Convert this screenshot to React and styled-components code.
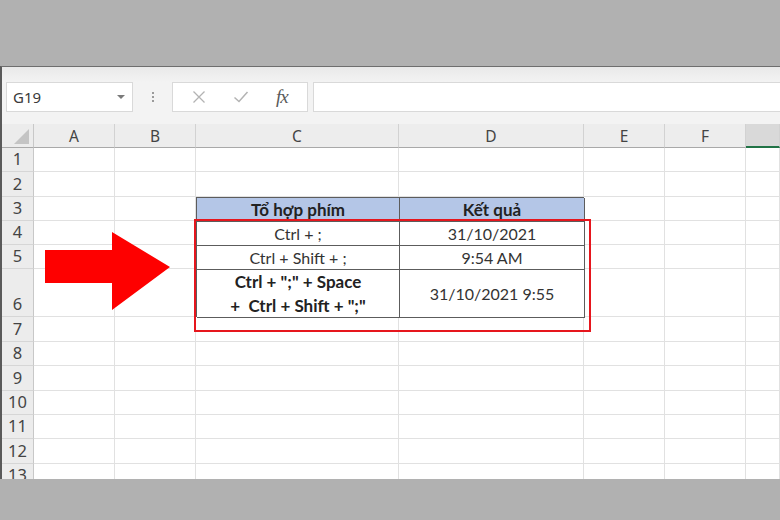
import React from "react";
import styled, { createGlobalStyle } from "styled-components";

const GlobalStyle = createGlobalStyle`
  html, body {
    margin: 0;
    padding: 0;
    background: #b1b1b1;
  }
  * {
    box-sizing: border-box;
  }
`;

const cols = ["A", "B", "C", "D", "E", "F", "G"];
const colWidths = "32px 81px 81px 203px 185px 81px 81px 1fr";
const rows = [24, 25, 24, 24, 24, 48, 25, 24, 25, 24, 24, 25, 24];

const Page = styled.div`
  position: relative;
  width: 780px;
  height: 520px;
  padding-top: 66px;
  overflow: hidden;
`;

const Screen = styled.div`
  width: 780px;
  height: 413px;
  background: #f3f3f3;
  border-top: 1px solid #6e6e6e;
  border-left: 2px solid #5a5a5a;
  overflow: hidden;
  font-family: "Noto Sans", "Open Sans", sans-serif;
`;

const TopStrip = styled.div`
  height: 15px;
  background: linear-gradient(#e9e9e9, #f3f3f3);
`;

const FormulaRow = styled.div`
  display: flex;
  align-items: stretch;
  height: 30px;
  padding-left: 4px;
`;

const NameBox = styled.div`
  width: 127px;
  background: #fff;
  border: 1px solid #d9d9d9;
  display: flex;
  align-items: center;
  justify-content: space-between;
  padding: 0 7px 0 6px;
  font-size: 15px;
  color: #3a3a3a;
`;

const Caret = styled.span`
  width: 0;
  height: 0;
  border-left: 4px solid transparent;
  border-right: 4px solid transparent;
  border-top: 4px solid #7a7a7a;
`;

const Dots = styled.div`
  width: 39px;
  display: flex;
  flex-direction: column;
  align-items: center;
  justify-content: center;
  gap: 2px;
  span {
    width: 2px;
    height: 2px;
    background: #9a9a9a;
  }
`;

const FxBox = styled.div`
  width: 136px;
  background: #fff;
  border: 1px solid #d9d9d9;
  display: flex;
  align-items: center;
  justify-content: space-around;
  padding: 0 6px;
`;

const Fx = styled.span`
  font-family: "Liberation Serif", serif;
  font-style: italic;
  font-size: 19px;
  color: #5a5a5a;
  letter-spacing: -1px;
`;

const Input = styled.div`
  flex: 1;
  margin-left: 5px;
  background: #fff;
  border: 1px solid #d9d9d9;
  border-right: none;
`;

const Sheet = styled.div`
  margin-top: 12px;
  display: grid;
  grid-template-columns: ${colWidths};
  grid-template-rows: 24px ${rows.map((h) => h + "px").join(" ")};
  background: #fff;
`;

const Corner = styled.div`
  background: #ececec;
  border-right: 1px solid #c8c8c8;
  border-bottom: 1px solid #a9a9a9;
  position: relative;
  &::after {
    content: "";
    position: absolute;
    right: 4px;
    bottom: 3px;
    border-left: 15px solid transparent;
    border-bottom: 15px solid #c4c4c4;
  }
`;

const ColHead = styled.div`
  background: ${(p) => (p.$active ? "#d9d9d9" : "#ededed")};
  border-right: 1px solid #d2d2d2;
  border-bottom: ${(p) => (p.$active ? "2px solid #217346" : "1px solid #a9a9a9")};
  display: flex;
  align-items: center;
  justify-content: center;
  font-size: 15.5px;
  color: #444;
`;

const RowHead = styled.div`
  background: #ececec;
  border-right: 1px solid #c8c8c8;
  border-bottom: 1px solid #d6d6d6;
  display: flex;
  align-items: flex-end;
  justify-content: center;
  padding-bottom: 1px;
  font-size: 16.5px;
  color: #444;
  line-height: 22px;
`;

const Cell = styled.div`
  border-right: 1px solid #e1e1e1;
  border-bottom: 1px solid #e1e1e1;
`;

const Table = styled.div`
  grid-column: 4 / 6;
  grid-row: 4 / 8;
  display: grid;
  grid-template-columns: 203px 185px;
  grid-template-rows: 24px 24px 24px 48px;
  border-top: 1px solid #5c5c5c;
  border-left: 1px solid #5c5c5c;
  font-family: "Lato", "Open Sans", sans-serif;
  font-size: 16px;
  color: #333;
`;

const TCell = styled.div`
  border-right: 1px solid #5c5c5c;
  border-bottom: 1px solid #5c5c5c;
  background: ${(p) => (p.$head ? "#b4c6e7" : "#fff")};
  font-weight: ${(p) => (p.$bold ? 700 : 400)};
  font-size: ${(p) => (p.$bold ? "17px" : "16px")};
  color: ${(p) => (p.$bold ? "#222" : "#333")};
  display: flex;
  align-items: center;
  justify-content: center;
  text-align: center;
  line-height: 24px;
  white-space: pre;
`;

const RedFrame = styled.div`
  position: absolute;
  left: 194px;
  top: 219px;
  width: 397px;
  height: 113px;
  border: 2px solid #e6161d;
`;

const Arrow = styled.svg`
  position: absolute;
  left: 44px;
  top: 231px;
`;

const tableRows = [
  [{ t: "Tổ hợp phím", head: true, bold: true }, { t: "Kết quả", head: true, bold: true }],
  [{ t: "Ctrl + ;" }, { t: "31/10/2021" }],
  [{ t: "Ctrl + Shift + ;" }, { t: "9:54 AM" }],
  [{ t: 'Ctrl + ";" + Space\n+  Ctrl + Shift + ";"', bold: true }, { t: "31/10/2021 9:55" }],
];

const inTable = (r, c) => r >= 3 && r <= 6 && (c === 2 || c === 3);

const App = () => {
  return (
    <Page>
      <GlobalStyle />
      <Screen>
        <TopStrip />
        <FormulaRow>
          <NameBox>
            G19
            <Caret />
          </NameBox>
          <Dots>
            <span />
            <span />
            <span />
          </Dots>
          <FxBox>
            <svg width="14" height="14" viewBox="0 0 14 14">
              <path d="M1.5 1.5 L12.5 12.5 M12.5 1.5 L1.5 12.5" stroke="#b3b3b3" strokeWidth="1.3" fill="none" />
            </svg>
            <svg width="16" height="14" viewBox="0 0 16 14">
              <path d="M1.5 7.5 L6 11.5 L14.5 2" stroke="#b3b3b3" strokeWidth="1.5" fill="none" />
            </svg>
            <Fx>fx</Fx>
          </FxBox>
          <Input />
        </FormulaRow>
        <Sheet>
          <Corner />
          {cols.map((c) => (
            <ColHead key={c} $active={c === "G"}>
              {c === "G" ? "" : c}
            </ColHead>
          ))}
          {rows.map((h, i) => {
            const r = i + 1;
            return (
              <React.Fragment key={r}>
                <RowHead>{r}</RowHead>
                {cols.map((c, ci) =>
                  inTable(r, ci) ? null : <Cell key={c} />
                )}
              </React.Fragment>
            );
          })}
          <Table>
            {tableRows.map((row, ri) =>
              row.map((cell, ci) => (
                <TCell key={ri + "-" + ci} $head={cell.head} $bold={cell.bold}>
                  {cell.t}
                </TCell>
              ))
            )}
          </Table>
        </Sheet>
      </Screen>
      <Arrow width="128" height="82" viewBox="0 0 128 82">
        <polygon points="1,19 68,19 68,1 126,36 68,79 68,52 1,52" fill="#fe0000" />
      </Arrow>
      <RedFrame />
    </Page>
  );
};

export default App;
